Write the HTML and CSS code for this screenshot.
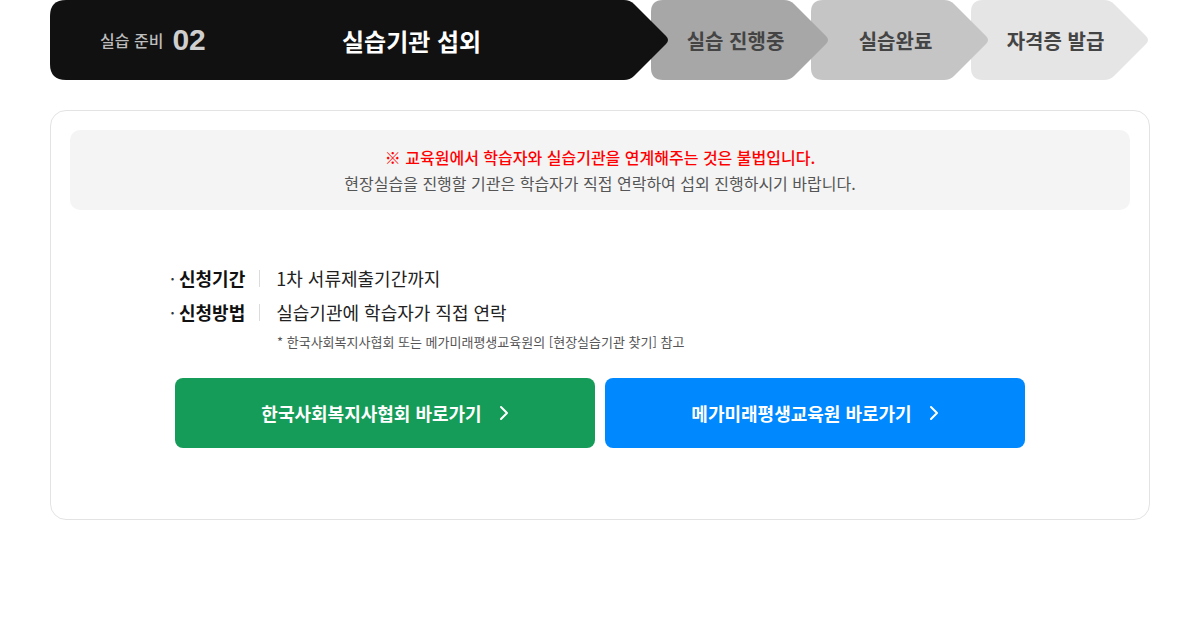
FILE: index.html
```html
<!DOCTYPE html>
<html lang="ko">
<head>
<meta charset="utf-8">
<title>실습기관 섭외</title>
<link rel="stylesheet" href="styles.css">
</head>
<body>
<div class="page">
  <div class="stepper">
    <div class="step step-current">
      <div class="step-label"><span class="step-label-text">실습 준비</span><span class="step-num">02</span></div>
      <div class="step-title">실습기관 섭외</div>
    </div>
    <div class="step step-g1"><span class="step-text">실습 진행중</span></div>
    <div class="step step-g2"><span class="step-text">실습완료</span></div>
    <div class="step step-g3"><span class="step-text">자격증 발급</span></div>
  </div>

  <div class="card">
    <div class="notice">
      <p class="notice-warn">※ 교육원에서 학습자와 실습기관을 연계해주는 것은 불법입니다.</p>
      <p class="notice-text">현장실습을 진행할 기관은 학습자가 직접 연락하여 섭외 진행하시기 바랍니다.</p>
    </div>

    <div class="info">
      <div class="info-row">
        <span class="info-label"><span class="dot">·</span>신청기간</span>
        <span class="sep"></span>
        <span class="info-value">1차 서류제출기간까지</span>
      </div>
      <div class="info-row">
        <span class="info-label"><span class="dot">·</span>신청방법</span>
        <span class="sep"></span>
        <span class="info-value">실습기관에 학습자가 직접 연락</span>
      </div>
      <p class="info-note">* 한국사회복지사협회 또는 메가미래평생교육원의 [현장실습기관 찾기] 참고</p>
    </div>

    <div class="buttons">
      <a class="btn btn-green" href="#">한국사회복지사협회 바로가기
        <svg class="chev" width="10" height="16" viewBox="0 0 10 16"><path d="M2 2 L8 8 L2 14" fill="none" stroke="#fff" stroke-width="2" stroke-linecap="round" stroke-linejoin="round"/></svg>
      </a>
      <a class="btn btn-blue" href="#">메가미래평생교육원 바로가기
        <svg class="chev" width="10" height="16" viewBox="0 0 10 16"><path d="M2 2 L8 8 L2 14" fill="none" stroke="#fff" stroke-width="2" stroke-linecap="round" stroke-linejoin="round"/></svg>
      </a>
    </div>
  </div>
</div>
</body>
</html>
```

FILE: styles.css
```css
* { box-sizing: border-box; }
html, body { margin: 0; padding: 0; background: #fff; }
body {
  font-family: "Noto Sans CJK KR", "Noto Sans", sans-serif;
  color: #222;
}
p { margin: 0; }

.page {
  width: 1100px;
  margin: 0 auto;
}

/* ---------- stepper ---------- */
.stepper {
  display: flex;
  height: 80px;
}
.step {
  position: relative;
  height: 80px;
  display: flex;
  align-items: center;
  flex: none;
}
.step-current {
  width: 620px;
  background: #111;
  z-index: 4;
  padding-left: 50px;
  clip-path: path("M16,0 L574,0 Q580,0 584,4 L616,36 Q620,40 616,44 L584,76 Q580,80 574,80 L16,80 Q0,80 0,64 L0,16 Q0,0 16,0 Z");
}
.step-g1, .step-g2, .step-g3 {
  width: 179px;
  margin-left: -19px;
  justify-content: center;
  padding-right: 10px;
  clip-path: path("M12,0 L133,0 Q139,0 143,4 L175,36 Q179,40 175,44 L143,76 Q139,80 133,80 L12,80 Q0,80 0,68 L0,12 Q0,0 12,0 Z");
}
.step-g1 { background: #a7a7a7; z-index: 3; }
.step-g2 { background: #c5c5c5; z-index: 2; }
.step-g3 { background: #e5e5e5; z-index: 1; }

.step-label {
  display: flex;
  align-items: center;
  width: 242px;
}
.step-label-text {
  font-size: 16px;
  font-weight: 500;
  color: #bdbdbd;
}
.step-num {
  margin-left: 9px;
  font-family: "Liberation Sans", Arial, sans-serif;
  font-size: 30px;
  font-weight: 700;
  color: #cfcfcf;
}
.step-title {
  font-size: 24px;
  font-weight: 700;
  color: #fff;
}
.step-text {
  font-size: 20px;
  font-weight: 700;
  color: #444;
}

/* ---------- card ---------- */
.card {
  margin-top: 30px;
  border: 1px solid #e3e3e3;
  border-radius: 16px;
  padding: 19px 19px 71px;
}
.notice {
  background: #f4f4f4;
  border-radius: 10px;
  padding: 14px 20px;
  text-align: center;
  font-size: 16px;
  line-height: 26px;
}
.notice-warn { color: #ff0000; font-weight: 500; }
.notice-text { color: #555; }

.info {
  margin: 51px 0 0 100px;
}
.info-row {
  display: flex;
  align-items: center;
  height: 34px;
  font-size: 18px;
}
.info-label {
  font-weight: 700;
  color: #111;
}
.dot {
  display: inline-block;
  width: 9px;
  font-weight: 400;
  color: #333;
}
.sep {
  width: 1px;
  height: 17px;
  background: #dcdcdc;
  margin: 0 16px 0 14px;
}
.info-value {
  color: #222;
}
.info-note {
  margin: 4px 0 0 107px;
  font-size: 13px;
  line-height: 18px;
  color: #555;
}

.buttons {
  display: flex;
  justify-content: center;
  gap: 10px;
  margin-top: 27px;
}
.btn {
  width: 420px;
  height: 70px;
  border-radius: 8px;
  display: flex;
  align-items: center;
  justify-content: center;
  gap: 17px;
  color: #fff;
  text-decoration: none;
  font-size: 18px;
  font-weight: 700;
}
.btn-green { background: #169c59; }
.btn-blue { background: #0089ff; }
.chev { display: block; }
```
